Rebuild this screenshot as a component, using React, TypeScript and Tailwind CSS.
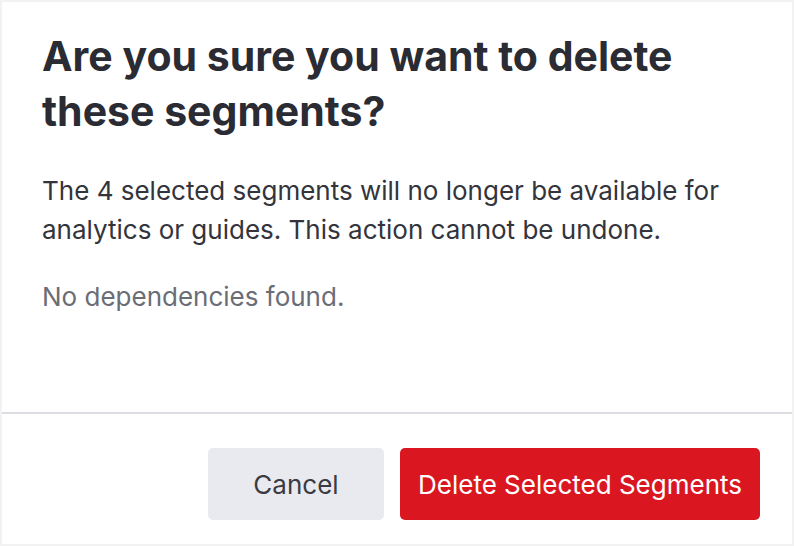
export default function App() {
  return (
    <div className="w-[794px] h-[546px] bg-[#f2f2f3] p-[2px]" style={{ fontFamily: "Inter, 'Noto Sans', sans-serif" }}>
      <div className="flex h-full flex-col bg-white">
        <div className="flex-1 px-[40px] pt-[27px]">
          <h1 className="max-w-[690px] text-[41px] font-bold leading-[55px] text-[#2a2b33]">
            Are you sure you want to delete these segments?
          </h1>
          <p className="mt-[32px] max-w-[710px] text-[26px] leading-[39px] text-[#33343c]">
            The 4 selected segments will no longer be available for analytics or guides. This action cannot be undone.
          </p>
          <p className="mt-[28px] text-[26px] leading-[39px] text-[#6b6d76]">No dependencies found.</p>
        </div>
        <div className="h-[2px] bg-[#dcdde3]" />
        <div className="flex h-[130px] items-start justify-end gap-[16px] pr-[32px] pt-[34px]">
          <button className="h-[72px] w-[176px] rounded-[5px] bg-[#e9eaef] text-[26px] text-[#3a3b42]">Cancel</button>
          <button className="h-[72px] w-[360px] rounded-[5px] bg-[#da1720] text-[26px] text-white">
            Delete Selected Segments
          </button>
        </div>
      </div>
    </div>
  )
}
